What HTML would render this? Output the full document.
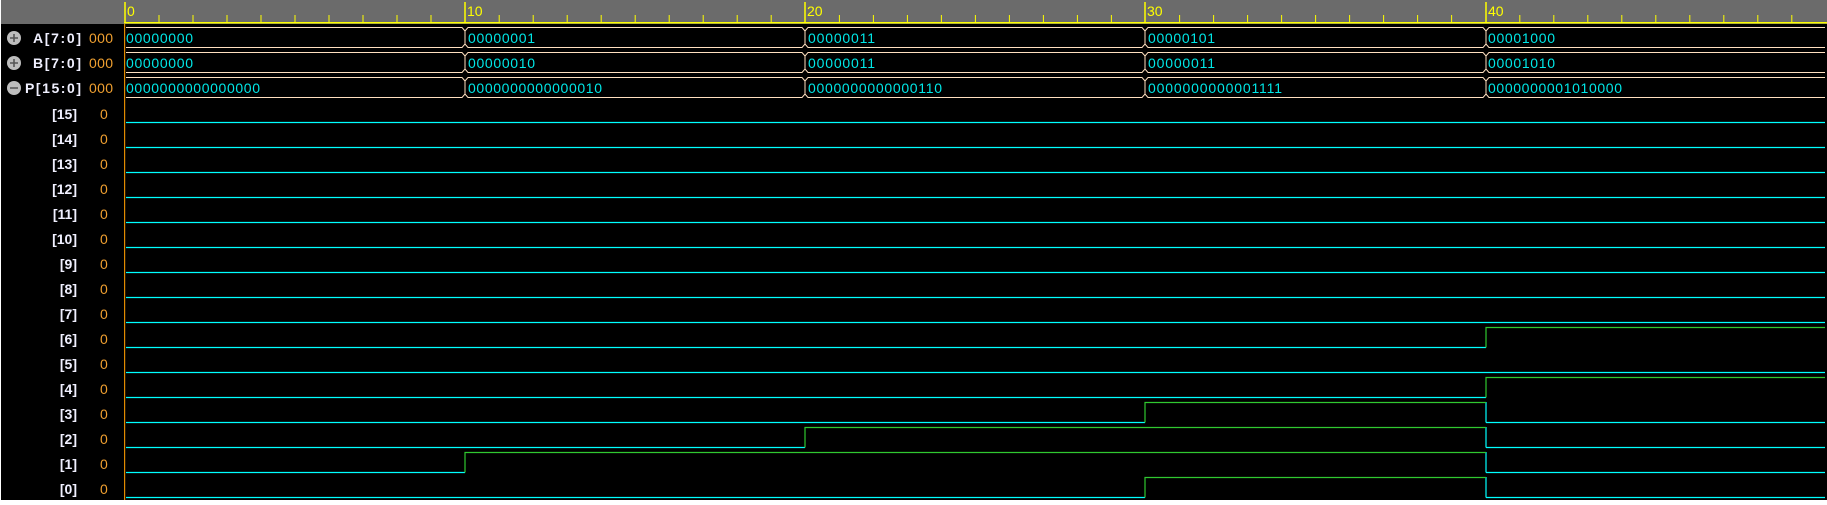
<!DOCTYPE html>
<html><head><meta charset="utf-8"><style>
html,body{margin:0;padding:0;background:#fff;}
svg{display:block;}
text{font-family:"Liberation Sans",sans-serif;}
</style></head><body>
<svg width="1827" height="505" viewBox="0 0 1827 505" xmlns="http://www.w3.org/2000/svg" xmlns:xlink="http://www.w3.org/1999/xlink">
<defs>
<path id="tk" stroke="#ffff00" stroke-width="1" fill="none" d="M159 15V22M193 15V22M227 15V22M261 15V22M295 15V22M329 15V22M363 15V22M397 15V22M431 15V22"/>
<path id="bus" stroke="#ffe0c0" stroke-width="1" fill="none" d="M126 27.5H462L465 31L468 27.5H802L805 31L808 27.5H1142L1145 31L1148 27.5H1483L1486 31L1489 27.5H1825M126 47.5H462L465 44L468 47.5H802L805 44L808 47.5H1142L1145 44L1148 47.5H1483L1486 44L1489 47.5H1825M465 31V44M805 31V44M1145 31V44M1486 31V44"/>
</defs>
<rect x="1" y="0" width="1826" height="500" fill="#000"/>
<!-- ruler -->
<rect x="1" y="0" width="1826" height="24" fill="#6b6b6b"/>
<rect x="124" y="22" width="1703" height="1.5" fill="#ffff00"/>
<use href="#tk" xlink:href="#tk"/>
<use href="#tk" xlink:href="#tk" x="340.2"/><use href="#tk" xlink:href="#tk" x="680.4"/><use href="#tk" xlink:href="#tk" x="1020.6"/><use href="#tk" xlink:href="#tk" x="1360.8"/>
<g stroke="#ffff00" stroke-width="1.5">
<path d="M125 2V22M465 2V22M805 2V22M1145 2V22M1486 2V22"/>
</g>
<g fill="#ffff00" font-size="14">
<text x="127" y="16">0</text><text x="467" y="16">10</text><text x="807" y="16">20</text><text x="1147" y="16">30</text><text x="1488" y="16">40</text>
</g>
<!-- divider -->
<rect x="124" y="24" width="1.2" height="476" fill="#e08a00"/>
<!-- icons -->
<g fill="#bdbdbd"><circle cx="14" cy="38" r="7"/><circle cx="14" cy="63" r="7"/><circle cx="14" cy="88" r="7"/></g>
<g stroke="#555" stroke-width="1.6"><path d="M10 38H18M14 34V42M10 63H18M14 59V67M10 88H18"/></g>
<!-- bus labels -->
<g fill="#f0f0ff" font-size="14" font-weight="bold">
<text x="81" y="43" text-anchor="end" textLength="48">A[7:0]</text>
<text x="81" y="68" text-anchor="end" textLength="48">B[7:0]</text>
<text x="81" y="93" text-anchor="end" textLength="56">P[15:0]</text>
</g>
<g fill="#f0a030" font-size="14">
<text x="89" y="43" textLength="24">000</text><text x="89" y="68" textLength="24">000</text><text x="89" y="93" textLength="24">000</text>
</g>
<!-- bit labels -->
<g fill="#f0f0ff" font-size="14" text-anchor="end" font-weight="bold">
<text x="77" y="119">[15]</text><text x="77" y="144">[14]</text><text x="77" y="169">[13]</text><text x="77" y="194">[12]</text>
<text x="77" y="219">[11]</text><text x="77" y="244">[10]</text><text x="77" y="269">[9]</text><text x="77" y="294">[8]</text>
<text x="77" y="319">[7]</text><text x="77" y="344">[6]</text><text x="77" y="369">[5]</text><text x="77" y="394">[4]</text>
<text x="77" y="419">[3]</text><text x="77" y="444">[2]</text><text x="77" y="469">[1]</text><text x="77" y="494">[0]</text>
</g>
<g fill="#f0a030" font-size="14">
<text x="100" y="119">0</text><text x="100" y="144">0</text><text x="100" y="169">0</text><text x="100" y="194">0</text>
<text x="100" y="219">0</text><text x="100" y="244">0</text><text x="100" y="269">0</text><text x="100" y="294">0</text>
<text x="100" y="319">0</text><text x="100" y="344">0</text><text x="100" y="369">0</text><text x="100" y="394">0</text>
<text x="100" y="419">0</text><text x="100" y="444">0</text><text x="100" y="469">0</text><text x="100" y="494">0</text>
</g>
<!-- bus boxes -->
<use href="#bus" xlink:href="#bus"/>
<use href="#bus" xlink:href="#bus" y="25"/><use href="#bus" xlink:href="#bus" y="50"/>
<g fill="#00e8e8" font-size="14">
<text x="126" y="43" textLength="67">00000000</text><text x="468" y="43" textLength="67">00000001</text><text x="808" y="43" textLength="67">00000011</text><text x="1148" y="43" textLength="67">00000101</text><text x="1488" y="43" textLength="67">00001000</text>
<text x="126" y="68" textLength="67">00000000</text><text x="468" y="68" textLength="67">00000010</text><text x="808" y="68" textLength="67">00000011</text><text x="1148" y="68" textLength="67">00000011</text><text x="1488" y="68" textLength="67">00001010</text>
<text x="126" y="93" textLength="134">0000000000000000</text><text x="468" y="93" textLength="134">0000000000000010</text><text x="808" y="93" textLength="134">0000000000000110</text><text x="1148" y="93" textLength="134">0000000000001111</text><text x="1488" y="93" textLength="134">0000000001010000</text>
</g>
<!-- bit waves -->
<g stroke="#00ffff" stroke-width="1.2" fill="none">
<path d="M126 122.5H1825M126 147.5H1825M126 172.5H1825M126 197.5H1825M126 222.5H1825M126 247.5H1825M126 272.5H1825M126 297.5H1825M126 322.5H1825M126 372.5H1825"/>
<path d="M126 347.5H1486M126 397.5H1486"/>
<path d="M126 422.5H1145M1486 422.5H1825M1486 402V422.5"/>
<path d="M126 447.5H805M1486 447.5H1825M1486 427V447.5"/>
<path d="M126 472.5H465M1486 472.5H1825M1486 452V472.5"/>
<path d="M126 497.5H1145M1486 497.5H1825M1486 477V497.5"/>
</g>
<g stroke="#30c830" stroke-width="1.2" fill="none">
<path d="M1486 347.5V327.5H1825"/>
<path d="M1486 397.5V377.5H1825"/>
<path d="M1145 422.5V402.5H1486"/>
<path d="M805 447.5V427.5H1486"/>
<path d="M465 472.5V452.5H1486"/>
<path d="M1145 497.5V477.5H1486"/>
</g>
</svg>
</body></html>
